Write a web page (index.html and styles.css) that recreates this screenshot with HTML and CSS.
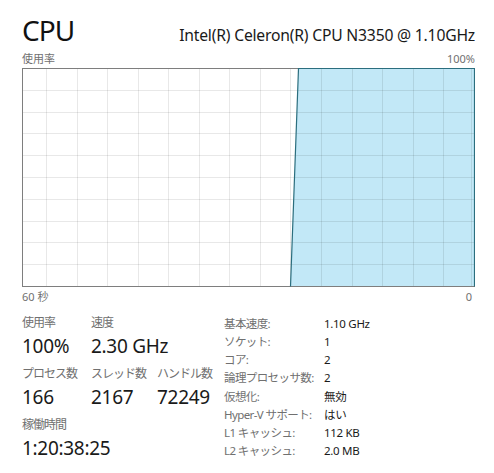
FILE: index.html
```html
<!DOCTYPE html>
<html lang="ja">
<head>
<meta charset="utf-8">
<link rel="stylesheet" href="styles.css">
</head>
<body>
<div class="page">
  <div class="header">
    <div class="title">CPU</div>
    <div class="model">Intel(R) Celeron(R) CPU N3350 @ 1.10GHz</div>
  </div>
  <div class="axis top">
    <span>使用率</span>
    <span>100%</span>
  </div>
  <svg class="graph" width="453" height="219" viewBox="0 0 453 219">
    <rect x="0" y="0" width="453" height="219" fill="#ffffff"/>
    <polygon points="276.5,0.5 452.5,0.5 452.5,218.5 268.5,218.5" fill="#c2e8f7"/>
    <g stroke="rgba(0,0,0,0.09)" stroke-width="1">
      <line x1="24.5" y1="0" x2="24.5" y2="219"/>
      <line x1="55.5" y1="0" x2="55.5" y2="219"/>
      <line x1="85.5" y1="0" x2="85.5" y2="219"/>
      <line x1="116.5" y1="0" x2="116.5" y2="219"/>
      <line x1="146.5" y1="0" x2="146.5" y2="219"/>
      <line x1="177.5" y1="0" x2="177.5" y2="219"/>
      <line x1="207.5" y1="0" x2="207.5" y2="219"/>
      <line x1="238.5" y1="0" x2="238.5" y2="219"/>
      <line x1="268.5" y1="0" x2="268.5" y2="219"/>
      <line x1="299.5" y1="0" x2="299.5" y2="219"/>
      <line x1="330.5" y1="0" x2="330.5" y2="219"/>
      <line x1="360.5" y1="0" x2="360.5" y2="219"/>
      <line x1="391.5" y1="0" x2="391.5" y2="219"/>
      <line x1="421.5" y1="0" x2="421.5" y2="219"/>
      <line x1="449.5" y1="0" x2="449.5" y2="219"/>
      <line x1="0" y1="22.5" x2="453" y2="22.5"/>
      <line x1="0" y1="44.5" x2="453" y2="44.5"/>
      <line x1="0" y1="65.5" x2="453" y2="65.5"/>
      <line x1="0" y1="87.5" x2="453" y2="87.5"/>
      <line x1="0" y1="109.5" x2="453" y2="109.5"/>
      <line x1="0" y1="131.5" x2="453" y2="131.5"/>
      <line x1="0" y1="153.5" x2="453" y2="153.5"/>
      <line x1="0" y1="174.5" x2="453" y2="174.5"/>
      <line x1="0" y1="196.5" x2="453" y2="196.5"/>
    </g>
    <rect x="0.5" y="0.5" width="452" height="218" fill="none" stroke="#7e7e7e" stroke-width="1"/>
    <polyline points="268.5,218.5 276.5,0.5 452.5,0.5 452.5,218.5" fill="none" stroke="#2b6e7e" stroke-width="1.2"/>
  </svg>
  <div class="axis bottom">
    <span>60 秒</span>
    <span>0</span>
  </div>
  <div class="stats">
    <div class="big">
      <div class="label">使用率</div>
      <div class="label">速度</div>
      <div class="label"></div>
      <div class="value">100%</div>
      <div class="value">2.30 GHz</div>
      <div class="value"></div>
      <div class="label gap">プロセス数</div>
      <div class="label gap">スレッド数</div>
      <div class="label gap">ハンドル数</div>
      <div class="value">166</div>
      <div class="value">2167</div>
      <div class="value">72249</div>
      <div class="label gap span">稼働時間</div>
      <div class="value span">1:20:38:25</div>
    </div>
    <div class="info">
      <div class="k">基本速度:</div><div class="v">1.10 GHz</div>
      <div class="k">ソケット:</div><div class="v">1</div>
      <div class="k">コア:</div><div class="v">2</div>
      <div class="k">論理プロセッサ数:</div><div class="v">2</div>
      <div class="k">仮想化:</div><div class="v">無効</div>
      <div class="k">Hyper-V サポート:</div><div class="v">はい</div>
      <div class="k">L1 キャッシュ:</div><div class="v">112 KB</div>
      <div class="k">L2 キャッシュ:</div><div class="v">2.0 MB</div>
    </div>
  </div>
</div>
</body>
</html>
```
FILE: styles.css
```css
html, body {
  margin: 0;
  padding: 0;
  background: #ffffff;
}
body {
  font-family: "Noto Sans", "Noto Sans CJK JP", sans-serif;
  color: #1a1a1a;
}
.page {
  width: 453px;
  padding: 12px 0 0 22px;
}
.header {
  display: flex;
  justify-content: space-between;
  align-items: baseline;
  height: 36px;
}
.title {
  font-size: 28px;
  line-height: 36px;
  letter-spacing: -1px;
  color: #111;
}
.model {
  font-size: 15.7px;
  line-height: 20px;
  color: #1a1a1a;
  letter-spacing: -0.2px;
}
.axis {
  display: flex;
  justify-content: space-between;
  font-size: 11px;
  color: #707070;
  line-height: 14px;
}
.axis.top {
  margin-top: 4px;
  height: 16px;
}
.graph {
  display: block;
}
.axis.bottom {
  margin-top: 3px;
  padding-right: 3px;
}
.stats {
  display: flex;
  margin-top: 11px;
}
.big {
  display: grid;
  grid-template-columns: 69px 66px 67px;
  width: 202px;
  align-content: start;
}
.big .label {
  font-size: 12px;
  line-height: 16px;
  color: #707070;
  white-space: nowrap;
  letter-spacing: -1px;
}
.big .label.gap {
  margin-top: 8px;
}
.big .value {
  font-size: 19px;
  line-height: 24px;
  margin-top: 3px;
  color: #1a1a1a;
  white-space: nowrap;
  letter-spacing: -0.3px;
}
.big .span {
  grid-column: 1 / 4;
}
.info {
  display: grid;
  grid-template-columns: 100px auto;
  margin-left: 0;
  font-size: 11.5px;
  line-height: 17.9px;
}
.info .k {
  color: #707070;
  white-space: nowrap;
  letter-spacing: -0.6px;
}
.info .v {
  color: #1a1a1a;
  white-space: nowrap;
  letter-spacing: -0.3px;
}
```
